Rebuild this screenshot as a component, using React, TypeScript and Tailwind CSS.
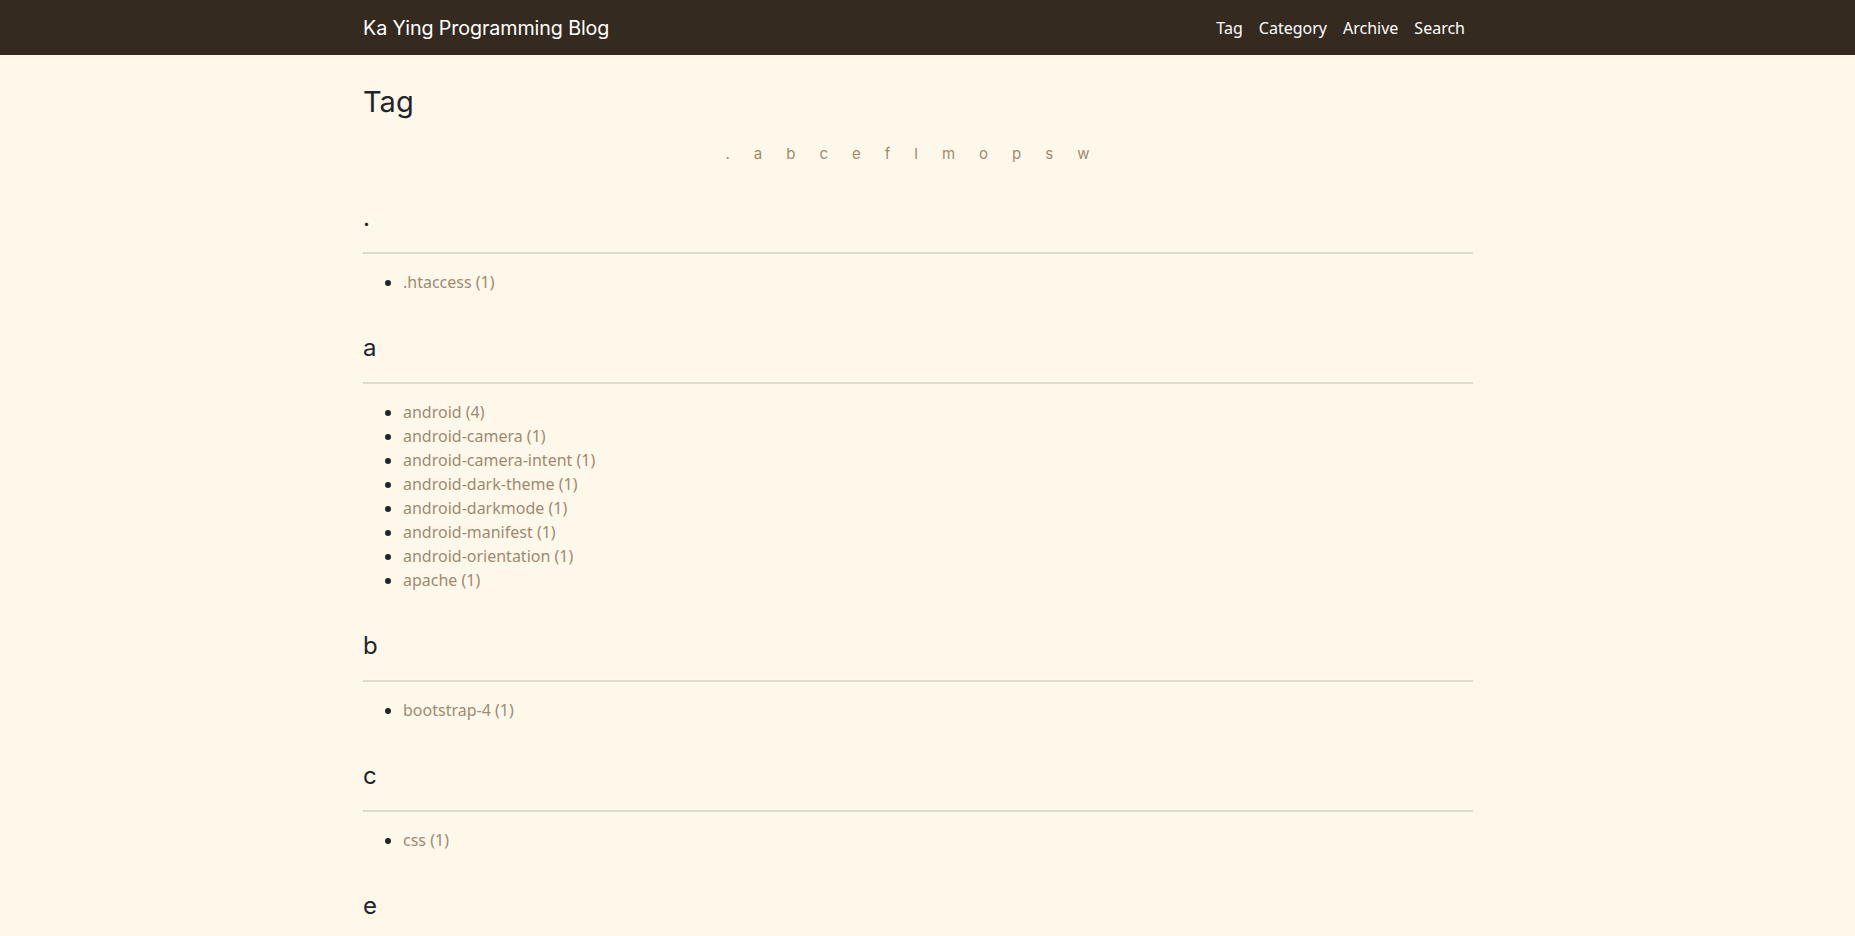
const letters = ['.', 'a', 'b', 'c', 'e', 'f', 'l', 'm', 'o', 'p', 's', 'w']

const tags: { letter: string; items: [string, number][] }[] = [
  { letter: '.', items: [['.htaccess', 1]] },
  {
    letter: 'a',
    items: [
      ['android', 4],
      ['android-camera', 1],
      ['android-camera-intent', 1],
      ['android-dark-theme', 1],
      ['android-darkmode', 1],
      ['android-manifest', 1],
      ['android-orientation', 1],
      ['apache', 1],
    ],
  },
  { letter: 'b', items: [['bootstrap-4', 1]] },
  { letter: 'c', items: [['css', 1]] },
  { letter: 'e', items: [['express', 1]] },
  { letter: 'f', items: [['flutter', 1]] },
  { letter: 'l', items: [['linux', 1]] },
  { letter: 'm', items: [['mysql', 1]] },
  { letter: 'o', items: [['onedrive', 1]] },
  { letter: 'p', items: [['php', 1]] },
  { letter: 's', items: [['ssl', 1]] },
  { letter: 'w', items: [['wordpress', 1]] },
]

export default function App() {
  return (
    <div className="min-h-screen bg-[#fef8eb] text-[#212529] font-['Inter',sans-serif]">
      <header className="h-[55px] bg-[#342a20]">
        <div className="ml-[363px] w-[1110px] h-full flex items-center justify-between">
          <a className="text-[19.7px] leading-[28px] pt-[1px] text-white tracking-[-0.1px]">Ka Ying Programming Blog</a>
          <nav className="flex items-center text-[16px] text-white font-['Noto_Sans',sans-serif]">
            <a className="px-2">Tag</a>
            <a className="px-2">Category</a>
            <a className="px-2">Archive</a>
            <a className="px-2">Search</a>
          </nav>
        </div>
      </header>

      <main className="ml-[363px] w-[1110px]">
        {/* page title */}
        <h1 className="pt-[29px] text-[29px] leading-[36px]">Tag</h1>

        <div className="mt-[24px] pr-[21px] flex justify-center text-[15px] leading-[20px] text-[#a08a70]">
          {letters.map((l) => (
            <a key={l} className="px-3">
              {l}
            </a>
          ))}
        </div>

        <div className="pt-[39px]">
          {tags.map((t) => (
            <section key={t.letter} className="mb-[39px]">
              <h2 className="text-[24px] leading-[29px]">{t.letter}</h2>
              <div className="mt-[20px] border-t-2 border-[#dedbd0]" />
              <ul className="mt-[16px] pl-10 list-disc text-[16px] leading-[24px] font-['Noto_Sans',sans-serif]">
                {t.items.map(([name, count]) => (
                  <li key={name}>
                    <a className="text-[#a08a70]">
                      {name} ({count})
                    </a>
                  </li>
                ))}
              </ul>
            </section>
          ))}
        </div>
      </main>
    </div>
  )
}
